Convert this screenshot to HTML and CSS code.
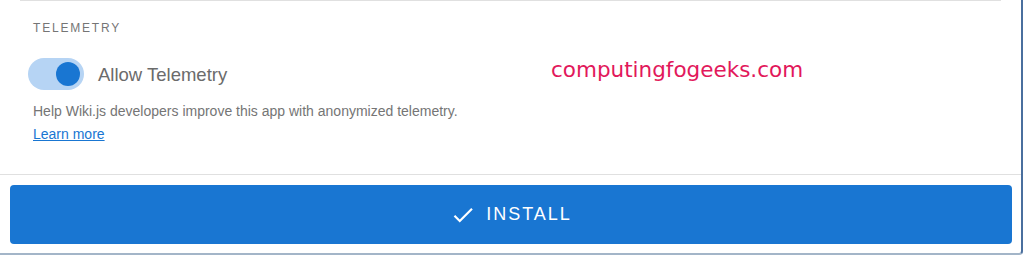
FILE: index.html
```html
<!DOCTYPE html>
<html lang="en">
<head>
    <meta charset="UTF-8">
    <meta name="viewport" content="width=device-width, initial-scale=1.0">
    <title>Wiki.js Setup - Telemetry</title>
    <link rel="stylesheet" href="styles.css">
</head>
<body>
    <div class="card">
        <div class="top-rule"></div>
        <div class="section">
            <div class="section-title">TELEMETRY</div>
            <label class="switch-row">
                <span class="switch">
                    <span class="switch-thumb"></span>
                </span>
                <span class="switch-label">Allow Telemetry</span>
            </label>
            <p class="hint">Help Wiki.js developers improve this app with anonymized telemetry.</p>
            <a class="learn-more" href="#">Learn more</a>
            <div class="watermark">computingfogeeks.com</div>
        </div>
        <div class="actions">
            <button class="install-btn">
                <svg class="check" viewBox="0 0 24 24" width="26" height="26">
                    <path d="M9 16.17L4.83 12l-1.42 1.41L9 19 21 7l-1.41-1.41z" fill="#fff"/>
                </svg>
                <span>INSTALL</span>
            </button>
        </div>
    </div>
</body>
</html>
```

FILE: styles.css
```css
body {
    margin: 0;
    padding: 0;
    background-color: #fff;
    font-family: 'Liberation Sans', Arial, sans-serif;
    color: #666;
}
.card {
    width: 1021px;
    height: 253px;
    background-color: #fff;
    border-right: 2px solid #4a6f9e;
    border-bottom: 2px solid #a3b5c8;
    border-bottom-right-radius: 4px;
}
.top-rule {
    height: 1px;
    margin: 0 20px;
    background-color: #e0e0e0;
}
.section {
    position: relative;
    height: 174px;
    padding: 20px 33px 0;
    box-sizing: border-box;
    border-bottom: 1px solid #e0e0e0;
}
.section-title {
    font-size: 12px;
    letter-spacing: 1.8px;
    color: #757575;
    line-height: 14px;
}
.switch-row {
    display: flex;
    align-items: center;
    gap: 14px;
    margin: 23px 0 0 -5px;
}
.switch {
    display: flex;
    align-items: center;
    justify-content: flex-end;
    width: 56px;
    height: 32px;
    padding: 0 4px;
    box-sizing: border-box;
    border-radius: 16px;
    background-color: #b6d4f4;
}
.switch-thumb {
    width: 24px;
    height: 24px;
    border-radius: 50%;
    background-color: #1976d2;
}
.switch-label {
    padding-top: 1px;
    font-size: 18.5px;
    color: #6b6b6b;
}
.hint {
    margin: 11px 0 0;
    font-size: 14px;
    line-height: 21px;
    color: #757575;
}
.learn-more {
    display: inline-block;
    margin-top: 2px;
    font-size: 14px;
    line-height: 20px;
    color: #1976d2;
}
.watermark {
    position: absolute;
    left: 551px;
    top: 56px;
    font-family: 'DejaVu Sans', sans-serif;
    font-size: 21.5px;
    color: #e2185b;
}
.actions {
    padding: 10px 10px 0;
}
.install-btn {
    display: flex;
    align-items: center;
    justify-content: center;
    gap: 10px;
    width: 1002px;
    height: 59px;
    border: none;
    border-radius: 4px;
    background-color: #1976d2;
    color: #fff;
    font-family: 'Liberation Sans', Arial, sans-serif;
    font-size: 18px;
    letter-spacing: 2px;
    cursor: pointer;
}
.check {
    width: 26px;
    height: 26px;
}
```
